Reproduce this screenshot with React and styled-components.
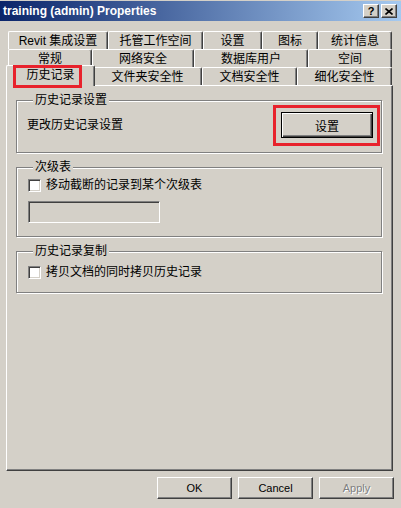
import React from "react";
import styled, { createGlobalStyle } from "styled-components";

const GlobalStyle = createGlobalStyle`
  html, body {
    margin: 0;
    padding: 0;
    background: #d4d0c8;
  }
  body {
    font-family: "Liberation Sans", "Noto Sans CJK SC", sans-serif;
    font-size: 12px;
    color: #000;
  }
`;

const tabRows = [
  [
    { label: "Revit 集成设置", w: 100 },
    { label: "托管工作空间", w: 95 },
    { label: "设置", w: 59 },
    { label: "图标", w: 56 },
    { label: "统计信息", w: 74 },
  ],
  [
    { label: "常规", w: 84 },
    { label: "网络安全", w: 102 },
    { label: "数据库用户", w: 114 },
    { label: "空间", w: 84 },
  ],
  [
    { label: "历史记录", w: 85, selected: true },
    { label: "文件夹安全性", w: 109 },
    { label: "文档安全性", w: 95 },
    { label: "细化安全性", w: 95 },
  ],
];

function App() {
  return (
    <Window>
      <GlobalStyle />
      <TitleBar>
        <Title>training (admin) Properties</Title>
        <CaptionButton>?</CaptionButton>
        <CaptionButton gap={2}>
          <svg width="8" height="7" viewBox="0 0 8 7">
            <path d="M0.5 0.5 L7.5 6.5 M7.5 0.5 L0.5 6.5" stroke="#000" strokeWidth="1.6" fill="none" />
          </svg>
        </CaptionButton>
      </TitleBar>

      <Tabs>
        {tabRows.map((row, i) => (
          <TabRow key={i}>
            {row.map((t) => (
              <Tab key={t.label} w={t.w} selected={t.selected}>
                {t.label}
              </Tab>
            ))}
          </TabRow>
        ))}
      </Tabs>

      <Panel>
        <Group>
          <Legend>历史记录设置</Legend>
          <SettingRow>
            <span>更改历史记录设置</span>
            <Marked>
              <DefaultButton>设置</DefaultButton>
            </Marked>
          </SettingRow>
        </Group>

        <Group>
          <Legend>次级表</Legend>
          <CheckRow top={4}>
            <CheckBox />
            <span>移动截断的记录到某个次级表</span>
          </CheckRow>
          <TextBox />
        </Group>

        <Group>
          <Legend>历史记录复制</Legend>
          <CheckRow top={7} bottom={13}>
            <CheckBox />
            <span>拷贝文档的同时拷贝历史记录</span>
          </CheckRow>
        </Group>
      </Panel>

      <ButtonBar>
        <Button>OK</Button>
        <Button>Cancel</Button>
        <Button disabled>Apply</Button>
      </ButtonBar>
    </Window>
  );
}

export default App;

const Window = styled.div`
  width: 401px;
  height: 508px;
  background: #d4d0c8;
  display: flex;
  flex-direction: column;
  overflow: hidden;
`;

const TitleBar = styled.div`
  height: 20px;
  margin-top: 1px;
  background: linear-gradient(to right, #0a246a, #a6caf0);
  display: flex;
  align-items: center;
  padding: 0 4px 0 3px;
`;

const Title = styled.div`
  flex: 1;
  color: #fff;
  font-family: "Liberation Sans", sans-serif;
  font-weight: bold;
  font-size: 12px;
`;

const CaptionButton = styled.div`
  width: 16px;
  height: 14px;
  box-sizing: border-box;
  margin-left: ${(p) => p.gap || 0}px;
  background: #d4d0c8;
  border: 1px solid;
  border-color: #fff #404040 #404040 #fff;
  box-shadow: inset -1px -1px #808080;
  display: flex;
  align-items: center;
  justify-content: center;
  font-family: "Liberation Sans", sans-serif;
  font-weight: bold;
  font-size: 11px;
  line-height: 11px;
`;

const Tabs = styled.div`
  margin-top: 10px;
  display: flex;
  flex-direction: column;
  position: relative;
  z-index: 2;
`;

const TabRow = styled.div`
  display: flex;
  height: 18px;
  padding: 0 9px 0 8px;
`;

const Tab = styled.div`
  width: ${(p) => p.w}px;
  box-sizing: border-box;
  border-top: 1px solid #fff;
  border-left: 1px solid #fff;
  border-right: 1px solid #404040;
  border-radius: 2px 2px 0 0;
  box-shadow: inset -1px 0 #808080;
  background: #d4d0c8;
  display: flex;
  align-items: center;
  justify-content: center;
  white-space: nowrap;
  line-height: 14px;
  position: relative;
  ${(p) =>
    p.selected &&
    `
    width: ${p.w + 4}px;
    margin: -2px -2px -1px -2px;
    height: 21px;
    padding-bottom: 2px;
    z-index: 3;
    &::after {
      content: "";
      position: absolute;
      left: 6px;
      top: -1px;
      width: 69px;
      height: 23px;
      box-sizing: border-box;
      border: 3px solid #e8222c;
    }
  `}
`;

const Panel = styled.div`
  height: 386px;
  box-sizing: border-box;
  margin: 0 8px 0 6px;
  border: 1px solid;
  border-color: #fff #404040 #404040 #fff;
  box-shadow: inset -1px -1px #808080;
  padding: 7px 10px 0 9px;
  display: flex;
  flex-direction: column;
  gap: 7px;
  position: relative;
  z-index: 1;
`;

const Group = styled.fieldset`
  margin: 0;
  padding: 0 8px 0 10px;
  border: 1px solid #808080;
  box-shadow: 1px 1px 0 #fff, inset 1px 1px 0 #fff;
  min-width: 0;
`;

const Legend = styled.legend`
  margin-left: 6px;
  padding: 0 2px;
  line-height: 14px;
  background: #d4d0c8;
`;

const SettingRow = styled.div`
  display: flex;
  align-items: center;
  justify-content: space-between;
  padding: 5px 0 14px 0;
  line-height: 14px;
`;

const Marked = styled.span`
  position: relative;
  display: inline-flex;
  &::after {
    content: "";
    position: absolute;
    inset: -7px -7px -8px -8px;
    border: 3px solid #e8222c;
  }
`;

const Button = styled.button`
  width: 75px;
  height: 22px;
  box-sizing: border-box;
  padding: 0;
  background: #d4d0c8;
  border: 1px solid;
  border-color: #fff #404040 #404040 #fff;
  box-shadow: inset -1px -1px #808080;
  font-family: "Liberation Sans", "Noto Sans CJK SC", sans-serif;
  font-size: 11px;
  color: ${(p) => (p.disabled ? "#808080" : "#000")};
  text-shadow: ${(p) => (p.disabled ? "1px 1px #fff" : "none")};
`;

const DefaultButton = styled.button`
  width: 92px;
  height: 26px;
  box-sizing: border-box;
  padding: 0;
  background: #d4d0c8;
  border: 1px solid #000;
  box-shadow: inset 1px 1px #fff, inset -1px -1px #404040, inset -2px -2px #808080;
  font-family: "Noto Sans CJK SC", sans-serif;
  font-size: 12px;
  color: #000;
`;

const CheckRow = styled.label`
  display: flex;
  align-items: center;
  gap: 5px;
  padding: ${(p) => p.top || 0}px 0 ${(p) => p.bottom || 0}px 1px;
  line-height: 14px;
`;

const CheckBox = styled.span`
  width: 13px;
  height: 13px;
  box-sizing: border-box;
  background: #fff;
  border: 1px solid;
  border-color: #808080 #fff #fff #808080;
  box-shadow: inset 1px 1px #404040, inset -1px -1px #d4d0c8;
`;

const TextBox = styled.div`
  width: 132px;
  height: 22px;
  box-sizing: border-box;
  margin: 9px 0 13px 1px;
  border: 1px solid;
  border-color: #808080 #fff #fff #808080;
  box-shadow: inset 1px 1px #404040, inset -1px -1px #d4d0c8;
  background: #d4d0c8;
`;

const ButtonBar = styled.div`
  display: flex;
  justify-content: flex-end;
  gap: 6px;
  padding: 6px 7px 0 0;
`;
